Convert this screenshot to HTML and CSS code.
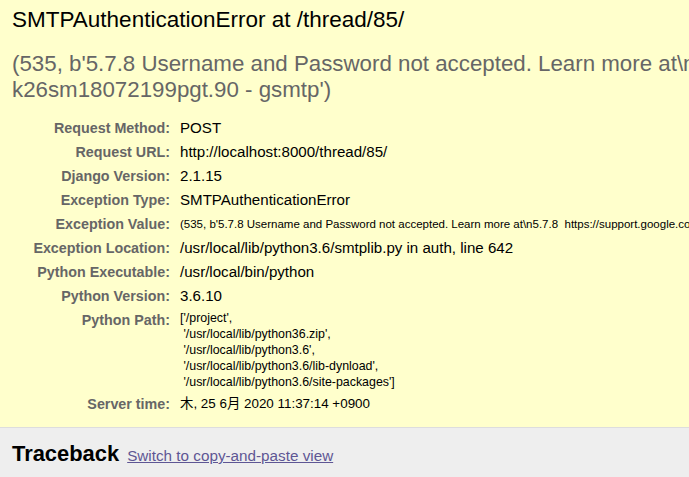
FILE: index.html
```html
<!DOCTYPE html>
<html lang="ja">
<head>
<meta charset="utf-8">
<title>SMTPAuthenticationError at /thread/85/</title>
<link rel="stylesheet" href="styles.css">
</head>
<body>
<div id="summary" class="summary">
  <h1 class="title">SMTPAuthenticationError at /thread/85/</h1>
  <pre class="exception-value">(535, b'5.7.8 Username and Password not accepted. Learn more at\n5.7.8  https://support.google.com/mail/?p=BadCredentials
k26sm18072199pgt.90 - gsmtp')</pre>
  <dl class="meta">
    <dt>Request Method:</dt><dd>POST</dd>
    <dt>Request URL:</dt><dd>http://localhost:8000/thread/85/</dd>
    <dt>Django Version:</dt><dd>2.1.15</dd>
    <dt>Exception Type:</dt><dd>SMTPAuthenticationError</dd>
    <dt>Exception Value:</dt><dd><pre class="small-pre one-line">(535, b'5.7.8 Username and Password not accepted. Learn more at\n5.7.8  https://support.google.com/mail/?p=BadCredentials k26sm18072199pgt.90 - gsmtp')</pre></dd>
    <dt>Exception Location:</dt><dd>/usr/local/lib/python3.6/smtplib.py in auth, line 642</dd>
    <dt>Python Executable:</dt><dd>/usr/local/bin/python</dd>
    <dt>Python Version:</dt><dd>3.6.10</dd>
    <dt>Python Path:</dt><dd><pre class="small-pre path">['/project',
 '/usr/local/lib/python36.zip',
 '/usr/local/lib/python3.6',
 '/usr/local/lib/python3.6/lib-dynload',
 '/usr/local/lib/python3.6/site-packages']</pre></dd>
    <dt>Server time:</dt><dd class="time">木, 25 6月 2020 11:37:14 +0900</dd>
  </dl>
</div>
<div id="traceback" class="traceback">
  <h2 class="tb-title">Traceback <span class="commands"><a href="#">Switch to copy-and-paste view</a></span></h2>
</div>
</body>
</html>
```
FILE: styles.css
```css
html, body {
  margin: 0;
  padding: 0;
  overflow: hidden;
}
body {
  font-family: "Liberation Sans", "Noto Sans CJK JP", sans-serif;
  color: #000;
  background: #eee;
}
.summary {
  background: #ffc;
  padding: 5px 12px 11px 12px;
  border-bottom: 1px solid #ddd;
}
.title {
  margin: 0;
  font-size: 22.5px;
  line-height: 30px;
  font-weight: normal;
  white-space: nowrap;
}
.exception-value {
  margin: 16px 0 0 0;
  font-family: "Liberation Sans", "Noto Sans CJK JP", sans-serif;
  font-size: 22.3px;
  line-height: 26px;
  color: #666;
  white-space: pre;
}
.meta {
  display: grid;
  grid-template-columns: 158px 1fr;
  column-gap: 10px;
  margin: 13px 0 0 0;
}
.meta dt {
  margin: 0;
  padding: 2px 0;
  text-align: right;
  font-weight: bold;
  font-size: 14.3px;
  line-height: 20px;
  color: #666;
  white-space: nowrap;
}
.meta dd {
  margin: 0;
  padding: 2px 0;
  font-size: 15.1px;
  line-height: 20px;
  white-space: nowrap;
}
.small-pre {
  margin: 0;
  font-family: "Liberation Sans", "Noto Sans CJK JP", sans-serif;
  white-space: pre;
}
.one-line {
  font-size: 11.5px;
  line-height: 20px;
}
.path {
  font-size: 12.4px;
  line-height: 16px;
}
.meta dd.time {
  font-size: 13.4px;
}
.traceback {
  background: #eee;
  padding: 13px 12px 20px 12px;
}
.tb-title {
  margin: 0;
  font-size: 21.9px;
  line-height: 26px;
  font-weight: bold;
  white-space: nowrap;
}
.commands {
  margin-left: 2px;
  font-size: 15.25px;
  font-weight: normal;
}
.commands a {
  color: #5e5694;
  text-decoration: underline;
}
```
